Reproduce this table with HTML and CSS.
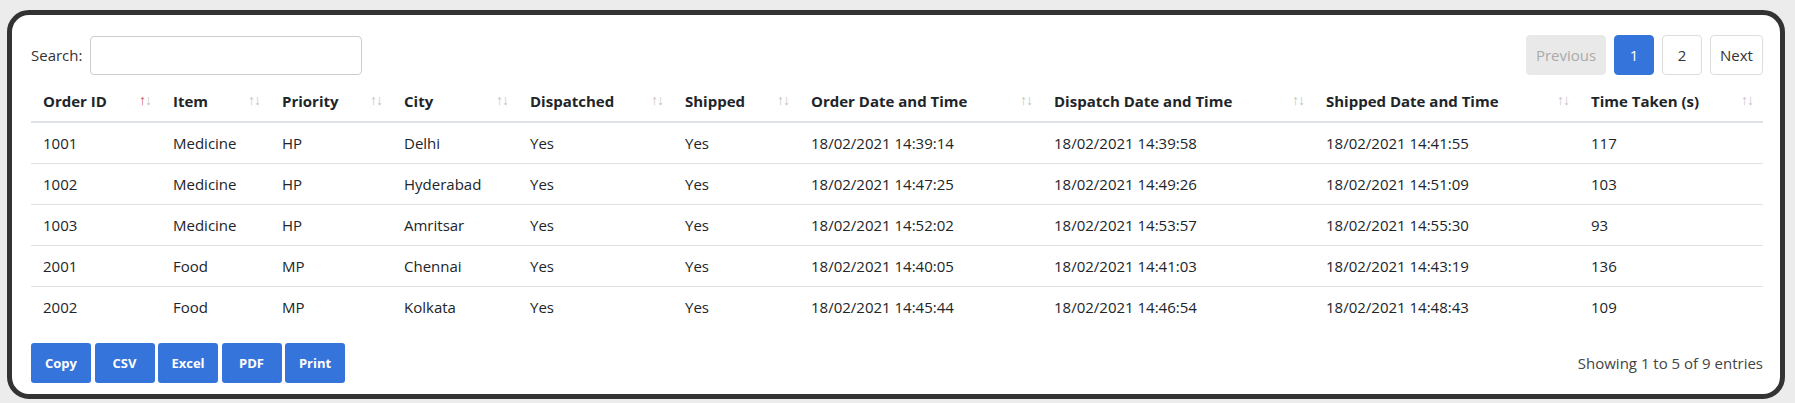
FILE: index.html
```html
<!DOCTYPE html>
<html>
<head>
<meta charset="utf-8">
<link rel="stylesheet" href="styles.css">
</head>
<body>
<div class="card">
  <div class="top-bar">
    <label class="search">Search: <input type="text" class="search-input"></label>
    <div class="pager">
      <span class="page-btn disabled">Previous</span>
      <span class="page-btn active">1</span>
      <span class="page-btn">2</span>
      <span class="page-btn next">Next</span>
    </div>
  </div>
  <table class="data">
    <colgroup>
      <col class="c1"><col class="c2"><col class="c3"><col class="c4"><col class="c5">
      <col class="c6"><col class="c7"><col class="c8"><col class="c9"><col class="c10">
    </colgroup>
    <thead>
      <tr>
        <th>Order ID<span class="sort"><span class="up on">↑</span><span class="dn">↓</span></span></th>
        <th>Item<span class="sort"><span class="up">↑</span><span class="dn">↓</span></span></th>
        <th>Priority<span class="sort"><span class="up">↑</span><span class="dn">↓</span></span></th>
        <th>City<span class="sort"><span class="up">↑</span><span class="dn">↓</span></span></th>
        <th>Dispatched<span class="sort"><span class="up">↑</span><span class="dn">↓</span></span></th>
        <th>Shipped<span class="sort"><span class="up">↑</span><span class="dn">↓</span></span></th>
        <th>Order Date and Time<span class="sort"><span class="up">↑</span><span class="dn">↓</span></span></th>
        <th>Dispatch Date and Time<span class="sort"><span class="up">↑</span><span class="dn">↓</span></span></th>
        <th>Shipped Date and Time<span class="sort"><span class="up">↑</span><span class="dn">↓</span></span></th>
        <th>Time Taken (s)<span class="sort"><span class="up">↑</span><span class="dn">↓</span></span></th>
      </tr>
    </thead>
    <tbody>
      <tr><td>1001</td><td>Medicine</td><td>HP</td><td>Delhi</td><td>Yes</td><td>Yes</td><td>18/02/2021 14:39:14</td><td>18/02/2021 14:39:58</td><td>18/02/2021 14:41:55</td><td>117</td></tr>
      <tr><td>1002</td><td>Medicine</td><td>HP</td><td>Hyderabad</td><td>Yes</td><td>Yes</td><td>18/02/2021 14:47:25</td><td>18/02/2021 14:49:26</td><td>18/02/2021 14:51:09</td><td>103</td></tr>
      <tr><td>1003</td><td>Medicine</td><td>HP</td><td>Amritsar</td><td>Yes</td><td>Yes</td><td>18/02/2021 14:52:02</td><td>18/02/2021 14:53:57</td><td>18/02/2021 14:55:30</td><td>93</td></tr>
      <tr><td>2001</td><td>Food</td><td>MP</td><td>Chennai</td><td>Yes</td><td>Yes</td><td>18/02/2021 14:40:05</td><td>18/02/2021 14:41:03</td><td>18/02/2021 14:43:19</td><td>136</td></tr>
      <tr><td>2002</td><td>Food</td><td>MP</td><td>Kolkata</td><td>Yes</td><td>Yes</td><td>18/02/2021 14:45:44</td><td>18/02/2021 14:46:54</td><td>18/02/2021 14:48:43</td><td>109</td></tr>
    </tbody>
  </table>
  <div class="bottom-bar">
    <div class="buttons">
      <span class="btn">Copy</span>
      <span class="btn">CSV</span>
      <span class="btn">Excel</span>
      <span class="btn">PDF</span>
      <span class="btn">Print</span>
    </div>
    <div class="info">Showing 1 to 5 of 9 entries</div>
  </div>
</div>
</body>
</html>
```

FILE: styles.css
```css
html, body {
  margin: 0;
  padding: 0;
  background: #ececec;
}
body {
  font-family: "Open Sans", "Noto Sans", sans-serif;
  font-size: 15px;
  color: #333;
  padding: 10px 10px 4px 7px;
}
.card {
  background: #fff;
  border: 5px solid #333;
  border-radius: 22px;
  padding: 20px 17px 11px 19px;
}
.top-bar {
  display: flex;
  justify-content: space-between;
  align-items: center;
  height: 40px;
}
.search {
  display: flex;
  align-items: center;
  gap: 8px;
  color: #333;
}
.search-input {
  width: 272px;
  height: 39px;
  box-sizing: border-box;
  border: 1px solid #ccc;
  border-radius: 4px;
  margin: 0;
}
.pager {
  display: flex;
  gap: 8px;
}
.page-btn {
  height: 40px;
  width: 40px;
  box-sizing: border-box;
  display: flex;
  align-items: center;
  justify-content: center;
  border: 1px solid #ddd;
  border-radius: 4px;
  color: #333;
}
.page-btn.disabled {
  background: #e9e9e9;
  border-color: #e9e9e9;
  color: #aaa;
  width: 80px;
}
.page-btn.active {
  background: #3574db;
  border-color: #3574db;
  color: #fff;
}
.page-btn.next {
  width: 53px;
}
table.data {
  width: 100%;
  table-layout: fixed;
  border-collapse: collapse;
  margin-top: 6px;
}
.c1 { width: 130px; }
.c2 { width: 109px; }
.c3 { width: 122px; }
.c4 { width: 126px; }
.c5 { width: 155px; }
.c6 { width: 126px; }
.c7 { width: 243px; }
.c8 { width: 272px; }
.c9 { width: 265px; }
.c10 { width: 184px; }
th {
  position: relative;
  text-align: left;
  font-weight: bold;
  color: #212529;
  padding: 8px 30px 8px 12px;
  line-height: 24px;
  border-bottom: 2px solid #dee2e6;
  white-space: nowrap;
}
td {
  padding: 8px 12px;
  line-height: 24px;
  color: #212529;
  white-space: nowrap;
}
tbody tr + tr td {
  border-top: 1px solid #dee2e6;
}
.sort {
  position: absolute;
  right: 10px;
  top: 50%;
  transform: translateY(-55%);
  font-size: 14px;
  font-weight: normal;
  letter-spacing: -1px;
  color: #c4c4c4;
}
.sort .on {
  color: #c9524f;
}
.bottom-bar {
  display: flex;
  justify-content: space-between;
  align-items: center;
  margin-top: 16px;
}
.buttons {
  display: flex;
  gap: 3.5px;
}
.btn {
  width: 60px;
  height: 40px;
  box-sizing: border-box;
  display: flex;
  align-items: center;
  justify-content: center;
  background: #3574db;
  color: #fff;
  font-weight: bold;
  font-size: 13px;
  border-radius: 3px;
}
.info {
  color: #444;
}
```
